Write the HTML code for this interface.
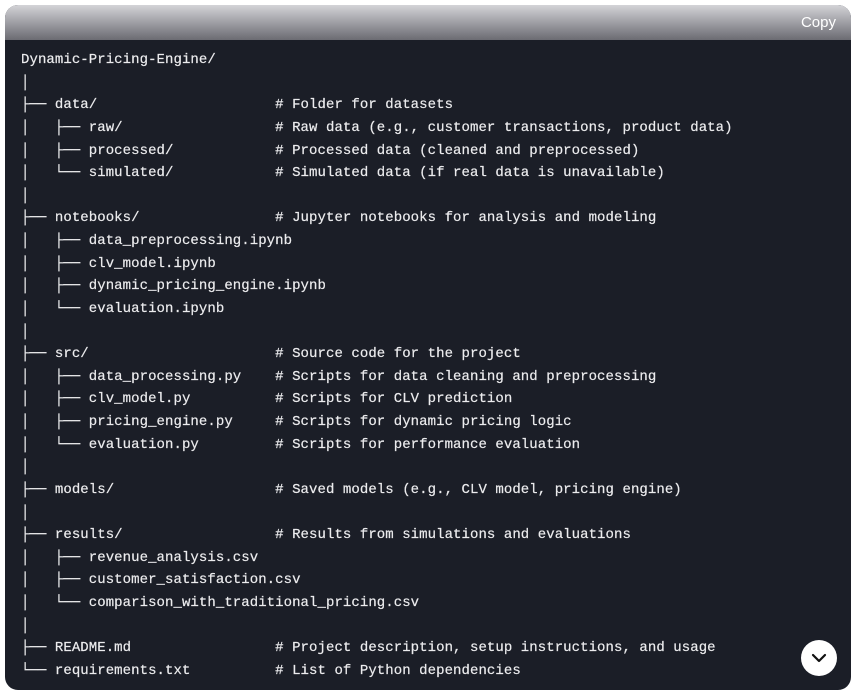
<!DOCTYPE html>
<html><head><meta charset="utf-8"><style>
html,body{margin:0;padding:0;background:#fff;width:857px;height:693px;overflow:hidden}
.box{position:absolute;left:5px;top:5px;width:846px;height:685px;border-radius:13px;overflow:hidden;background:#1b1e27}
.hd{height:35px;background:linear-gradient(#d3d3d7,#6b6b72);position:relative}
.hd span{position:absolute;right:15px;top:9px;font:15px "Liberation Sans",sans-serif;color:#fff}
pre{margin:0;position:absolute;left:16px;top:44px;font:14px/22.63px "Liberation Mono",monospace;letter-spacing:0.07px;color:#ececee;-webkit-text-stroke:0.2px #ececee}
.btn{position:absolute;left:796px;top:635px;width:36px;height:36px;border-radius:50%;background:#fff}
</style></head><body>
<div class="box"><div class="hd"><span>Copy</span></div>
<pre>Dynamic-Pricing-Engine/
│
├── data/                     # Folder for datasets
│   ├── raw/                  # Raw data (e.g., customer transactions, product data)
│   ├── processed/            # Processed data (cleaned and preprocessed)
│   └── simulated/            # Simulated data (if real data is unavailable)
│
├── notebooks/                # Jupyter notebooks for analysis and modeling
│   ├── data_preprocessing.ipynb
│   ├── clv_model.ipynb
│   ├── dynamic_pricing_engine.ipynb
│   └── evaluation.ipynb
│
├── src/                      # Source code for the project
│   ├── data_processing.py    # Scripts for data cleaning and preprocessing
│   ├── clv_model.py          # Scripts for CLV prediction
│   ├── pricing_engine.py     # Scripts for dynamic pricing logic
│   └── evaluation.py         # Scripts for performance evaluation
│
├── models/                   # Saved models (e.g., CLV model, pricing engine)
│
├── results/                  # Results from simulations and evaluations
│   ├── revenue_analysis.csv
│   ├── customer_satisfaction.csv
│   └── comparison_with_traditional_pricing.csv
│
├── README.md                 # Project description, setup instructions, and usage
└── requirements.txt          # List of Python dependencies</pre>
<div class="btn"><svg width="36" height="36" viewBox="0 0 36 36"><path d="M12 15l6 6 6-6" fill="none" stroke="#111" stroke-width="2.2" stroke-linecap="round" stroke-linejoin="round"/></svg></div>
</div>
</body></html>
